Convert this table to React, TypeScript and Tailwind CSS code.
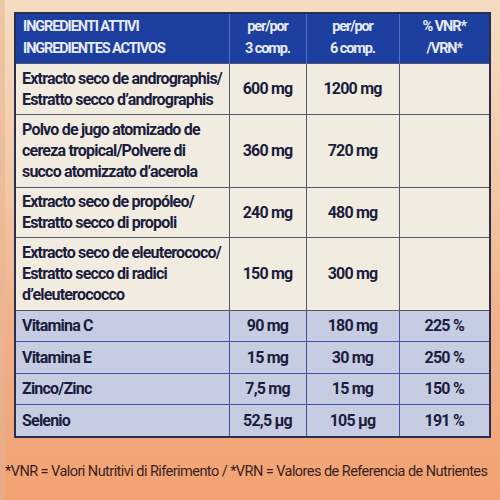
import React from "react";

const rows = [
  { name: ["Extracto seco de andrographis/", "Estratto secco d’andrographis"], a: "600 mg", b: "1200 mg", c: "", h: "h-[51px]", vit: false },
  { name: ["Polvo de jugo atomizado de", "cereza tropical/Polvere di", "succo atomizzato d’acerola"], a: "360 mg", b: "720 mg", c: "", h: "h-[73px]", vit: false },
  { name: ["Extracto seco de propóleo/", "Estratto secco di propoli"], a: "240 mg", b: "480 mg", c: "", h: "h-[50px]", vit: false },
  { name: ["Extracto seco de eleuterococo/", "Estratto secco di radici", "d’eleuterococco"], a: "150 mg", b: "300 mg", c: "", h: "h-[73px]", vit: false },
  { name: ["Vitamina C"], a: "90 mg", b: "180 mg", c: "225 %", h: "h-[31px]", vit: true },
  { name: ["Vitamina E"], a: "15 mg", b: "30 mg", c: "250 %", h: "h-[32px]", vit: true },
  { name: ["Zinco/Zinc"], a: "7,5 mg", b: "15 mg", c: "150 %", h: "h-[31px]", vit: true },
  { name: ["Selenio"], a: "52,5 µg", b: "105 µg", c: "191 %", h: "h-[33px]", vit: true },
];

export default function App() {
  return (
    <div
      className="w-[500px] h-[500px] overflow-hidden bg-[linear-gradient(180deg,#f5ddc2_0%,#f2c9a8_35%,#f0b08a_65%,#f2a272_100%)] relative"
      style={{ fontFamily: "Roboto, 'Liberation Sans', sans-serif" }}
    >
      <div className="absolute left-0 top-0 h-full w-[5px] bg-[linear-gradient(180deg,#efc7a6_0%,#e8a985_100%)]" />
      <div className="pt-[12px] pl-[14px]">
        <table className="border-collapse border-2 border-[#2b2d4e] table-fixed w-[475px] text-[#1b1d3e]">
          <colgroup>
            <col className="w-[214px]" />
            <col className="w-[77px]" />
            <col className="w-[93px]" />
            <col className="w-[91px]" />
          </colgroup>
          <thead>
            <tr className="h-[50px] bg-[#1d3f9f] text-[#e6ebf7] text-[14.5px] font-bold leading-[22px] tracking-[-1.1px]">
              <th className="text-left align-middle pl-[7px] border-r border-[#5670bd] font-bold">
                <div>INGREDIENTI ATTIVI</div>
                <div>INGREDIENTES ACTIVOS</div>
              </th>
              <th className="text-center border-r border-[#5670bd] font-bold">
                <div>per/por</div>
                <div>3 comp.</div>
              </th>
              <th className="text-center border-r border-[#5670bd] font-bold">
                <div>per/por</div>
                <div>6 comp.</div>
              </th>
              <th className="text-center font-bold">
                <div>% VNR*</div>
                <div>/VRN*</div>
              </th>
            </tr>
          </thead>
          <tbody className="text-[16px] font-bold leading-[21px] tracking-[-0.8px]">
            {rows.map((r, i) => {
              const line = r.vit ? "border-[#3d55a3]" : "border-[#55576c]";
              const bg = r.vit ? "bg-[#c6cce2]" : "bg-[#f1ecdf]";
              return (
                <tr key={i} className={`${r.h} ${bg}`}>
                  <td className={`pl-[6px] align-middle border ${line}`}>
                    {r.name.map((n, j) => (
                      <div key={j} className="whitespace-nowrap">{n}</div>
                    ))}
                  </td>
                  <td className={`text-center align-middle border ${line}`}>{r.a}</td>
                  <td className={`text-center align-middle border ${line}`}>{r.b}</td>
                  <td className={`text-center align-middle border ${line}`}>{r.c}</td>
                </tr>
              );
            })}
          </tbody>
        </table>
      </div>
      <div className="mt-[25px] pl-[5px] text-[14.5px] leading-[18px] text-[#3a1e1c] tracking-[-0.55px] whitespace-nowrap">
        *VNR = Valori Nutritivi di Riferimento / *VRN = Valores de Referencia de Nutrientes
      </div>
    </div>
  );
}
